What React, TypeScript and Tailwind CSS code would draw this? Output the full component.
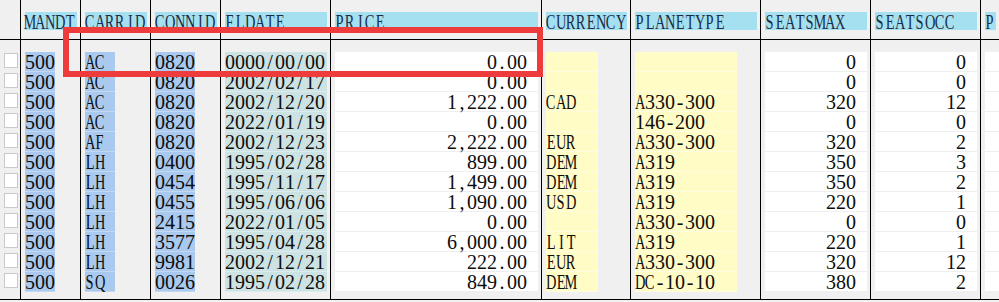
import React from "react";

type Col = {
  key: string;
  colCls: string;
  cellCls: string;
  textCls: string;
  field: number;
};

const rows: string[][] = [
  ["500", "AC", "0820", "0000/00/00", "0.00", "", "", "0", "0"],
  ["500", "AC", "0820", "2002/02/17", "0.00", "", "", "0", "0"],
  ["500", "AC", "0820", "2002/12/20", "1,222.00", "CAD", "A330-300", "320", "12"],
  ["500", "AC", "0820", "2022/01/19", "0.00", "", "146-200", "0", "0"],
  ["500", "AF", "0820", "2002/12/23", "2,222.00", "EUR", "A330-300", "320", "2"],
  ["500", "LH", "0400", "1995/02/28", "899.00", "DEM", "A319", "350", "3"],
  ["500", "LH", "0454", "1995/11/17", "1,499.00", "DEM", "A319", "350", "2"],
  ["500", "LH", "0455", "1995/06/06", "1,090.00", "USD", "A319", "220", "1"],
  ["500", "LH", "2415", "2022/01/05", "0.00", "", "A330-300", "0", "0"],
  ["500", "LH", "3577", "1995/04/28", "6,000.00", "LIT", "A319", "220", "1"],
  ["500", "LH", "9981", "2002/12/21", "222.00", "EUR", "A330-300", "320", "12"],
  ["500", "SQ", "0026", "1995/02/28", "849.00", "DEM", "DC-10-10", "380", "2"],
];

const blue = "h-[20px] w-[30px] ml-[4px] bg-[#a9c9ee] border-b border-[#c4d8f2]";
const cols: Col[] = [
  { key: "MANDT", colCls: "w-[60px] border-r border-black", cellCls: blue, textCls: "justify-start", field: 0 },
  { key: "CARRID", colCls: "w-[70px] border-r border-black", cellCls: blue, textCls: "justify-start", field: 1 },
  { key: "CONNID", colCls: "w-[70px] border-r border-black", cellCls: "h-[20px] w-[40px] ml-[4px] bg-[#a9c9ee] border-b border-[#c4d8f2]", textCls: "justify-start", field: 2 },
  { key: "FLDATE", colCls: "w-[110px] border-r border-black", cellCls: "h-[20px] w-[102px] ml-[4px] bg-[#cde2e2] border-b border-[#dcebeb]", textCls: "justify-start", field: 3 },
  { key: "PRICE", colCls: "w-[211px] border-r border-black", cellCls: "h-[20px] ml-[4px] mr-[3px] bg-white border-b border-[#efefef]", textCls: "justify-end pr-[11px]", field: 4 },
  { key: "CURRENCY", colCls: "w-[89px] border-r border-black", cellCls: "h-[20px] w-[52px] ml-[4px] bg-[#fffcc6] border-b border-[#fffde0]", textCls: "justify-start", field: 5 },
  { key: "PLANETYPE", colCls: "w-[130px] border-r border-black", cellCls: "h-[20px] w-[102px] ml-[4px] bg-[#fffcc6] border-b border-[#fffde0]", textCls: "justify-start", field: 6 },
  { key: "SEATSMAX", colCls: "w-[110px] border-r border-black", cellCls: "h-[20px] ml-[4px] mr-[3px] bg-white border-b border-[#efefef]", textCls: "justify-end pr-[11px]", field: 7 },
  { key: "SEATSOCC", colCls: "w-[110px] border-r border-black", cellCls: "h-[20px] ml-[4px] mr-[3px] bg-white border-b border-[#efefef]", textCls: "justify-end pr-[11px]", field: 8 },
  { key: "P", colCls: "flex-1", cellCls: "h-[20px] ml-[4px] bg-white border-b border-[#efefef]", textCls: "justify-start", field: -1 },
];

function Mono({ text }: { text: string }) {
  return (
    <>
      {Array.from(text).map((ch, i) => (
        <span key={i} className="inline-flex w-[10px] justify-center">
          <span className={/[A-Z]/.test(ch) ? "inline-block scale-x-[0.72]" : "inline-block"}>{ch}</span>
        </span>
      ))}
    </>
  );
}

export default function App() {
  return (
    <div className="relative w-[999px] h-[302px] bg-[#f0f0f0] overflow-hidden font-['Liberation_Serif',serif] text-[20px]">
      <div className="flex w-[999px]">
        <div className="w-[21px] border-r border-black flex flex-col">
          <div className="h-[40px] border-b border-black" />
          <div className="h-[260px] border-b border-black pt-[12px]">
            {rows.map((_, i) => (
              <div key={i} className="h-[20px] pt-[1px] pl-[4px]">
                <div className="w-[14px] h-[15px] bg-white border border-[#c9c9c9]" />
              </div>
            ))}
          </div>
        </div>
        {cols.map((c) => (
          <div key={c.key} className={"flex flex-col " + c.colCls}>
            <div className="h-[40px] border-b border-black pt-[12px]">
              <div className="h-[18px] ml-[4px] mr-[3px] bg-[#a5e0f0] text-[#1b2c45] leading-[20px] whitespace-nowrap">
                <Mono text={c.key} />
              </div>
            </div>
            <div className="h-[260px] border-b border-black pt-[12px]">
              {rows.map((r, i) => (
                <div key={i} className={c.cellCls}>
                  <div className={"flex leading-[20px] text-[#0d0d0d] whitespace-nowrap " + c.textCls}>
                    <Mono text={c.field >= 0 ? r[c.field] : ""} />
                  </div>
                </div>
              ))}
            </div>
          </div>
        ))}
      </div>
      <div className="absolute left-[63px] top-[27px] w-[480px] h-[50px] border-[6px] border-[#ee3b3b]" />
    </div>
  );
}
